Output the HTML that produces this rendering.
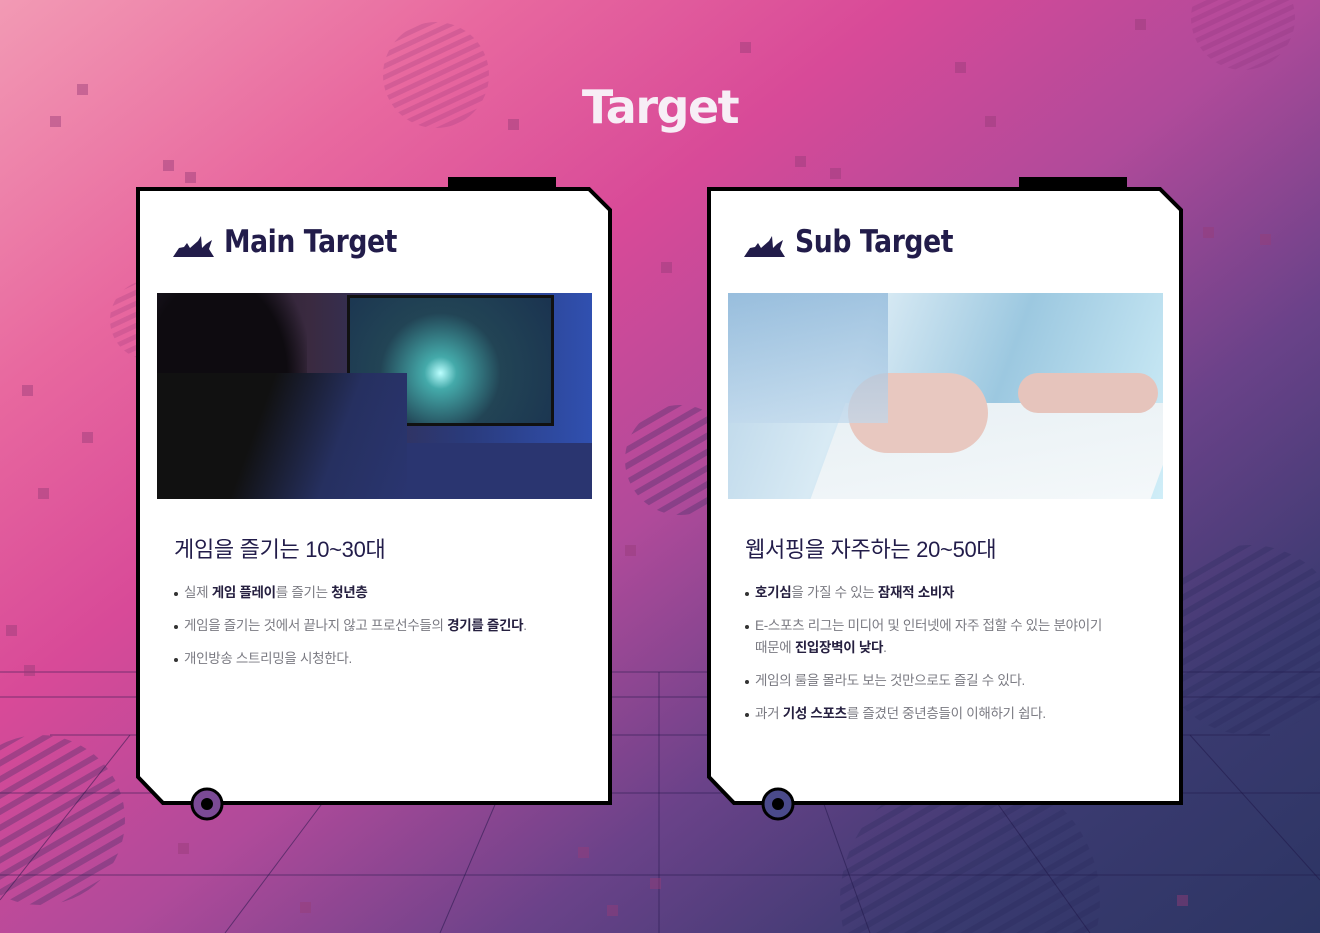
<!DOCTYPE html>
<html><head><meta charset="utf-8">
<style>
*{margin:0;padding:0;box-sizing:border-box}
html{overflow:hidden;width:1320px;height:933px}
body{width:1320px;height:933px;overflow:hidden;position:relative;font-family:"Liberation Sans","Noto Sans CJK KR",sans-serif;
background:linear-gradient(142deg,#f29ab4 0%,#e8689f 20%,#d84a98 36%,#b04a9a 52%,#6a4289 68%,#3a3a70 84%,#2c3563 100%);}
.bg{position:absolute;left:0;top:0}
.title{position:absolute;left:0;width:1320px;top:80px;text-align:center;color:#f7eef6;font-weight:bold;font-size:46px;letter-spacing:-1.5px;font-family:"DejaVu Sans","Liberation Sans",sans-serif}
.card{position:absolute;top:0;left:0}
.h{position:absolute;font-size:31px;font-weight:bold;color:#221c4a;letter-spacing:-0.5px;font-family:"DejaVu Sans","Liberation Sans",sans-serif;transform:scaleX(0.86);transform-origin:left;white-space:nowrap}
.sub{position:absolute;font-size:22px;color:#221c4a;font-family:"Liberation Sans","Noto Sans CJK KR",sans-serif;letter-spacing:-0.3px;white-space:nowrap}
ul{position:absolute;list-style:none;font-size:13.5px;color:#7a7a82;font-family:"Liberation Sans","Noto Sans CJK KR",sans-serif;letter-spacing:-0.3px}
li{line-height:22px;margin-bottom:11px;padding-left:10px;position:relative}
li:before{content:"";position:absolute;left:0;top:10px;width:4px;height:4px;border-radius:2px;background:#333}
b{color:#262040}
.img{position:absolute;overflow:hidden}
</style></head><body>
<svg class="bg" width="1320" height="933">
<defs>
<pattern id="st" width="10" height="10" patternUnits="userSpaceOnUse" patternTransform="rotate(-25)"><rect width="10" height="5" fill="rgba(120,40,110,0.18)"/></pattern>
<pattern id="st2" width="14" height="14" patternUnits="userSpaceOnUse" patternTransform="rotate(-30)"><rect width="14" height="6" fill="rgba(40,40,90,0.28)"/></pattern>
</defs>
<circle cx="436" cy="75" r="53" fill="url(#st)"/>
<circle cx="1243" cy="18" r="52" fill="url(#st)"/>
<circle cx="680" cy="460" r="55" fill="url(#st2)"/>
<circle cx="40" cy="820" r="85" fill="url(#st2)"/>
<circle cx="1250" cy="640" r="95" fill="url(#st2)"/>
<circle cx="970" cy="900" r="130" fill="url(#st2)"/>
<circle cx="150" cy="320" r="40" fill="url(#st)"/>
<g stroke="rgba(30,20,70,0.5)" stroke-width="1" fill="none">
<line x1="0" y1="672" x2="1320" y2="672"/><line x1="0" y1="697" x2="1320" y2="697"/>
<line x1="50" y1="735" x2="1270" y2="735"/><line x1="0" y1="793" x2="1320" y2="793"/>
<line x1="0" y1="875" x2="1320" y2="875"/>
<line x1="659" y1="672" x2="659" y2="933"/>
<line x1="130" y1="735" x2="0" y2="900"/><line x1="330" y1="793" x2="225" y2="933"/>
<line x1="500" y1="793" x2="440" y2="933"/><line x1="820" y1="793" x2="870" y2="933"/>
<line x1="990" y1="793" x2="1090" y2="933"/><line x1="1190" y1="735" x2="1320" y2="880"/>
</g>
<g fill="rgba(150,60,120,0.45)">
<rect x="77" y="84" width="11" height="11"/><rect x="50" y="116" width="11" height="11"/><rect x="163" y="160" width="11" height="11"/><rect x="185" y="172" width="11" height="11"/>
<rect x="508" y="119" width="11" height="11"/><rect x="740" y="42" width="11" height="11"/><rect x="955" y="62" width="11" height="11"/><rect x="985" y="116" width="11" height="11"/>
<rect x="1135" y="19" width="11" height="11"/><rect x="795" y="156" width="11" height="11"/><rect x="830" y="168" width="11" height="11"/><rect x="661" y="262" width="11" height="11"/>
<rect x="1203" y="227" width="11" height="11"/><rect x="1260" y="234" width="11" height="11"/><rect x="22" y="385" width="11" height="11"/><rect x="82" y="432" width="11" height="11"/>
<rect x="38" y="488" width="11" height="11"/><rect x="625" y="545" width="11" height="11"/><rect x="6" y="625" width="11" height="11"/><rect x="24" y="665" width="11" height="11"/>
<rect x="178" y="843" width="11" height="11"/><rect x="578" y="847" width="11" height="11"/><rect x="650" y="878" width="11" height="11"/><rect x="300" y="902" width="11" height="11"/><rect x="607" y="905" width="11" height="11"/><rect x="1177" y="895" width="11" height="11"/>
</g>
</svg>
<div class="title">Target</div>

<svg class="card" width="1320" height="933">
<g>
<rect x="448" y="177" width="108" height="14" fill="#000"/>
<polygon points="138,189 589,189 610,210 610,803 163,803 138,777" fill="#fff" stroke="#000" stroke-width="4"/>
<circle cx="207" cy="804" r="15" fill="#7b4a95" stroke="#000" stroke-width="3"/><circle cx="207" cy="804" r="6" fill="#000"/>
<path d="M173 257 L179 248 L184 247 L187 243 L190 248 L198 241 L201 236 L202 248 L206 244 L212 240 L209 249 L214 257 Z" fill="#221c4a"/>
</g>
<g>
<rect x="1019" y="177" width="108" height="14" fill="#000"/>
<polygon points="709,189 1160,189 1181,210 1181,803 734,803 709,777" fill="#fff" stroke="#000" stroke-width="4"/>
<circle cx="778" cy="804" r="15" fill="#4a4a8a" stroke="#000" stroke-width="3"/><circle cx="778" cy="804" r="6" fill="#000"/>
<path d="M744 257 L750 248 L755 247 L758 243 L761 248 L769 241 L772 236 L773 248 L777 244 L783 240 L780 249 L785 257 Z" fill="#221c4a"/>
</g>
</svg>

<div class="h" style="left:224px;top:224px">Main Target</div>
<div class="h" style="left:795px;top:224px">Sub Target</div>

<div class="img" style="left:157px;top:293px;width:435px;height:206px;background:linear-gradient(90deg,#1a1520 0%,#3a2a40 35%,#2a3a7a 70%,#3050b0 100%)">
<div style="position:absolute;left:0;top:0;width:150px;height:206px;background:radial-gradient(ellipse at 40% 40%,#0e0b10 55%,transparent 75%)"></div>
<div style="position:absolute;left:190px;top:2px;width:207px;height:131px;background:#111;padding:3px"><div style="width:100%;height:100%;background:radial-gradient(circle at 45% 60%,#bff 0%,#4aa 12%,#245 45%,#1a3350 100%)"></div></div>
<div style="position:absolute;left:235px;top:150px;width:200px;height:56px;background:#2a3570"></div>
<div style="position:absolute;left:0;top:80px;width:250px;height:126px;background:linear-gradient(110deg,#111 40%,#263060 70%,#2a3570)"></div>
</div>

<div class="img" style="left:728px;top:293px;width:435px;height:206px;background:linear-gradient(110deg,#b8d4e8 0%,#d8eaf4 30%,#9cc8e0 60%,#d0eef8 100%)">
<div style="position:absolute;left:100px;top:110px;width:340px;height:96px;background:linear-gradient(170deg,#e8f0f4,#f4f8fa);transform:skewX(-20deg)"></div>
<div style="position:absolute;left:120px;top:80px;width:140px;height:80px;border-radius:40px;background:#e8c8c0"></div>
<div style="position:absolute;left:290px;top:80px;width:140px;height:40px;border-radius:20px;background:#e6c4bc"></div>
<div style="position:absolute;left:0;top:0;width:160px;height:130px;background:linear-gradient(180deg,#8ab4d8,#c0d8ec);opacity:.7"></div>
</div>

<div class="sub" style="left:174px;top:532px">게임을 즐기는 10~30대</div>
<ul style="left:174px;top:582px;width:420px">
<li>실제 <b>게임 플레이</b>를 즐기는 <b>청년층</b></li>
<li>게임을 즐기는 것에서 끝나지 않고 프로선수들의 <b>경기를 즐긴다</b>.</li>
<li>개인방송 스트리밍을 시청한다.</li>
</ul>

<div class="sub" style="left:745px;top:532px">웹서핑을 자주하는 20~50대</div>
<ul style="left:745px;top:582px;width:385px">
<li><b>호기심</b>을 가질 수 있는 <b>잠재적 소비자</b></li>
<li>E-스포츠 리그는 미디어 및 인터넷에 자주 접할 수 있는 분야이기<br>때문에 <b>진입장벽이 낮다</b>.</li>
<li>게임의 룰을 몰라도 보는 것만으로도 즐길 수 있다.</li>
<li>과거 <b>기성 스포츠</b>를 즐겼던 중년층들이 이해하기 쉽다.</li>
</ul>
</body></html>
